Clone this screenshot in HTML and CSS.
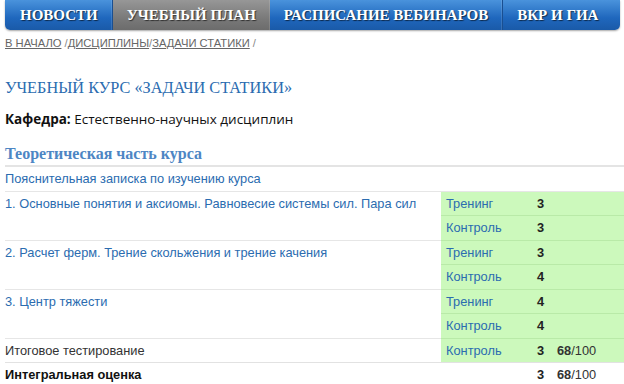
FILE: index.html
```html
<!DOCTYPE html>
<html lang="ru">
<head>
  <meta charset="UTF-8">
  <title>Учебный курс «Задачи статики»</title>
  <link rel="stylesheet" href="styles.css">
</head>
<body>
  <div class="page">
    <nav class="menu">
      <a class="menu-item" href="#">Новости</a>
      <a class="menu-item active" href="#">Учебный план</a>
      <a class="menu-item" href="#">Расписание вебинаров</a>
      <a class="menu-item" href="#">ВКР и ГИА</a>
    </nav>

    <div class="crumbs">
      <a href="#">В начало</a> /<a href="#">Дисциплины</a>/<a href="#">Задачи статики</a> /
    </div>

    <h1 class="course-title">Учебный курс «Задачи статики»</h1>

    <p class="dept"><b>Кафедра:</b> Естественно-научных дисциплин</p>

    <h2 class="section-title">Теоретическая часть курса</h2>

    <table class="plan">
      <tr>
        <td colspan="4" class="note"><a href="#">Пояснительная записка по изучению курса</a></td>
      </tr>
      <tr>
        <td rowspan="2" class="topic"><a href="#">1. Основные понятия и аксиомы. Равновесие системы сил. Пара сил</a></td>
        <td class="kind"><a href="#">Тренинг</a></td>
        <td class="score">3</td>
        <td class="total"></td>
      </tr>
      <tr>
        <td class="kind"><a href="#">Контроль</a></td>
        <td class="score">3</td>
        <td class="total"></td>
      </tr>
      <tr>
        <td rowspan="2" class="topic"><a href="#">2. Расчет ферм. Трение скольжения и трение качения</a></td>
        <td class="kind"><a href="#">Тренинг</a></td>
        <td class="score">3</td>
        <td class="total"></td>
      </tr>
      <tr>
        <td class="kind"><a href="#">Контроль</a></td>
        <td class="score">4</td>
        <td class="total"></td>
      </tr>
      <tr>
        <td rowspan="2" class="topic"><a href="#">3. Центр тяжести</a></td>
        <td class="kind"><a href="#">Тренинг</a></td>
        <td class="score">4</td>
        <td class="total"></td>
      </tr>
      <tr>
        <td class="kind"><a href="#">Контроль</a></td>
        <td class="score">4</td>
        <td class="total"></td>
      </tr>
      <tr class="final">
        <td class="topic plain">Итоговое тестирование</td>
        <td class="kind"><a href="#">Контроль</a></td>
        <td class="score">3</td>
        <td class="total"><b>68</b>/100</td>
      </tr>
      <tr class="result">
        <td colspan="2" class="topic strong">Интегральная оценка</td>
        <td class="score">3</td>
        <td class="total"><b>68</b>/100</td>
      </tr>
    </table>
  </div>
</body>
</html>
```

FILE: styles.css
```css
body {
  margin: 0;
  background: #fff;
  font-family: 'Liberation Sans', Arial, sans-serif;
  color: #222;
  overflow: hidden;
}

.page {
  padding-left: 5px;
}

a {
  color: #2b6cb0;
  text-decoration: none;
}

/* top menu */
.menu {
  display: flex;
  height: 30px;
  margin-right: 4px;
  background: linear-gradient(#4a93dc, #1f67bd 60%, #1a5aa8);
  border-radius: 0 0 5px 5px;
  box-shadow: 0 1px 2px rgba(0, 0, 0, 0.35);
  overflow: hidden;
}

.menu-item {
  display: flex;
  align-items: center;
  flex-shrink: 0;
  white-space: nowrap;
  padding: 0 14px;
  font-family: 'Liberation Serif', 'Times New Roman', serif;
  font-weight: bold;
  font-size: 15px;
  text-transform: uppercase;
  color: #fff;
  text-shadow: 1px 1px 1px rgba(0, 0, 0, 0.6);
  border-right: 1px solid #1a4f91;
  box-shadow: inset -1px 0 0 rgba(255, 255, 255, 0.12);
}

.menu-item:first-child {
  padding-left: 15px;
}

.menu-item:last-child {
  border-right: none;
  box-shadow: none;
}

.menu-item.active {
  background: linear-gradient(#979797, #7a7a7a 60%, #6c6c6c);
  border-right: none;
}

/* breadcrumbs */
.crumbs {
  margin-top: 7px;
  font-size: 11.2px;
  color: #888;
  text-transform: uppercase;
}

.crumbs a {
  color: #666;
  text-decoration: underline;
}

.course-title {
  margin: 29px 0 0;
  font-family: 'Liberation Serif', 'Times New Roman', serif;
  font-weight: normal;
  font-size: 16.3px;
  text-transform: uppercase;
  color: #2b6cb0;
}

.dept {
  margin: 12px 0 0;
  font-family: 'Open Sans', 'Liberation Sans', sans-serif;
  font-size: 13.5px;
  color: #111;
}

.section-title {
  margin: 17px 0 0;
  padding-bottom: 2px;
  font-family: 'Liberation Serif', 'Times New Roman', serif;
  font-size: 16px;
  color: #4d86c4;
  border-bottom: 2px solid #e4e4e4;
}

/* plan table */
.plan {
  width: 100%;
  border-collapse: collapse;
  font-size: 12.8px;
}

.plan td {
  padding: 0;
  height: 23.5px;
  line-height: 23px;
  vertical-align: top;
  border-bottom: 1px solid #e6e6e6;
}

.plan .topic {
  width: 436px;
}

.plan .kind,
.plan .score,
.plan .total {
  background: #ccf9bc;
  border-bottom: 1px solid #b9eaa8;
}

.plan .kind {
  width: 91px;
  padding-left: 5px;
}

.plan .score {
  width: 20px;
  font-weight: bold;
  color: #222;
}

.plan .total {
  color: #333;
}

.plan .plain {
  color: #333;
}

.plan .final td {
  border-bottom: 1px solid #e2e2e2;
}

.plan .result td {
  background: none;
  border-bottom: none;
}

.plan .strong {
  font-weight: bold;
  color: #111;
}
```
